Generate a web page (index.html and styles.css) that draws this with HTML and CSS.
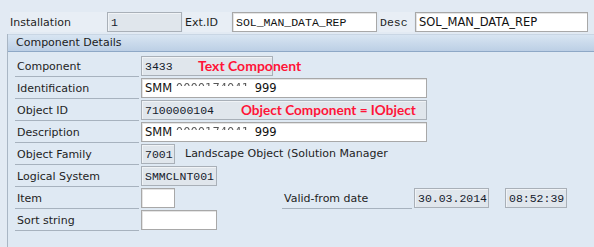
FILE: index.html
```html
<!DOCTYPE html>
<html lang="en">
<head>
    <meta charset="UTF-8">
    <title>Component Details</title>
    <link rel="stylesheet" href="styles.css">
</head>
<body>
    <div class="top-row">
        <span class="lbl lbl-inst">Installation</span>
        <span class="box ro mono w-inst">1</span>
        <span class="lbl lbl-ext">Ext.ID</span>
        <span class="box mono w-ext">SOL_MAN_DATA_REP</span>
        <span class="lbl lbl-desc mono">Desc</span>
        <span class="box w-desc">SOL_MAN_DATA_REP</span>
    </div>

    <div class="group">
        <div class="group-head">Component Details</div>
        <div class="group-body">
            <div class="row">
                <span class="field-lbl">Component</span>
                <span class="box ro mono w-comp">3433</span>
                <span class="note note-text">Text Component</span>
            </div>
            <div class="row">
                <span class="field-lbl">Identification</span>
                <span class="box w-long">SMM <span class="hidden-part">0000174041</span> 999</span>
            </div>
            <div class="row">
                <span class="field-lbl">Object ID</span>
                <span class="box ro mono w-long">7100000104</span>
                <span class="note note-obj">Object Component = IObject</span>
            </div>
            <div class="row">
                <span class="field-lbl">Description</span>
                <span class="box w-long">SMM <span class="hidden-part">0000174041</span> 999</span>
            </div>
            <div class="row">
                <span class="field-lbl">Object Family</span>
                <span class="box ro mono w-short">7001</span>
                <span class="plain">Landscape Object (Solution Manager</span>
            </div>
            <div class="row">
                <span class="field-lbl">Logical System</span>
                <span class="box ro mono w-mid">SMMCLNT001</span>
            </div>
            <div class="row">
                <span class="field-lbl">Item</span>
                <span class="box w-short"></span>
                <span class="field-lbl lbl-valid">Valid-from date</span>
                <span class="box ro mono w-date">30.03.2014</span>
                <span class="box ro mono w-time">08:52:39</span>
            </div>
            <div class="row">
                <span class="field-lbl">Sort string</span>
                <span class="box w-mid"></span>
            </div>
        </div>
    </div>
</body>
</html>
```

FILE: styles.css
```css
body {
    margin: 0;
    background-color: #e2eaf3;
    font-family: 'DejaVu Sans', 'Liberation Sans', sans-serif;
    font-size: 11px;
    color: #1e1e1e;
    height: 247px;
    overflow: hidden;
}

.mono {
    font-family: 'Liberation Mono', 'DejaVu Sans Mono', monospace;
    font-size: 11.5px;
}

/* top line */
.top-row {
    display: flex;
    align-items: center;
    padding: 12px 0 0 10px;
    height: 20px;
}

.lbl {
    display: flex;
    align-items: center;
    height: 20px;
    background-color: #e8eef5;
}

.lbl-inst { width: 97px; }
.lbl-ext { width: 48px; margin-left: 1px; padding-left: 2px; box-sizing: border-box; }
.lbl-desc { width: 35px; margin-left: 2px; padding-left: 1px; box-sizing: border-box; }

.box {
    display: flex;
    align-items: center;
    box-sizing: border-box;
    height: 20px;
    padding-left: 3px;
    background-color: #fff;
    border: 1px solid #a8a8a8;
    box-shadow: inset 1px 1px 0 #e4e4e4;
    white-space: pre;
    overflow: hidden;
    color: #111;
}

.box.ro {
    background-color: #e0e6ec;
    border-color: #a9b0b8;
    box-shadow: inset 1px 1px 0 #f0f3f6;
    color: #15202c;
}

.w-inst { width: 75px; }
.w-ext { width: 145px; margin-left: 1px; }
.w-desc { width: 173px; margin-left: 1px; font-size: 11.5px; }

/* group box */
.group {
    margin: 2px 0 0 7px;
    border-left: 1px solid #a9b6c4;
    height: 220px;
}

.group-head {
    height: 16px;
    line-height: 16px;
    padding-left: 8px;
    background: linear-gradient(#d8e5f2, #bccfe5);
    border-top: 1px solid #c9d6e4;
    border-bottom: 1px solid #8ea8c6;
    color: #1b1b1b;
}

.group-body {
    padding: 4px 0 0 7px;
    background-color: #dfe9f3;
    height: 200px;
}

.row {
    position: relative;
    display: flex;
    align-items: flex-start;
    height: 22px;
}

.field-lbl {
    display: flex;
    align-items: center;
    box-sizing: border-box;
    width: 124px;
    height: 21px;
    padding-left: 2px;
    margin-right: 2px;
    border-bottom: 1px solid #a7b2be;
}

.w-comp { width: 132px; }
.w-long { width: 286px; font-family: 'DejaVu Sans', sans-serif; font-size: 11.5px; }
.w-long.mono { font-family: 'Liberation Mono', monospace; }
.w-short { width: 34px; }
.w-mid { width: 76px; }
.w-date { width: 75px; }
.w-time { width: 62px; margin-left: 16px; }

.lbl-valid {
    width: 130px;
    margin-left: 107px;
}

.plain {
    margin-left: 10px;
    line-height: 20px;
}

/* digits blanked out in the screenshot: only their tops remain */
.hidden-part {
    color: transparent;
    background: linear-gradient(to bottom, #555 38%, #fff 38%);
    -webkit-background-clip: text;
    background-clip: text;
    margin-right: 2px;
}

/* red annotations on top of the form */
.note {
    position: absolute;
    font-family: 'Lato', 'Liberation Sans', sans-serif;
    font-weight: bold;
    font-size: 14px;
    color: #ff1438;
    line-height: 20px;
}

.note-text { left: 183px; top: 0; }
.note-obj { left: 226px; top: 0; font-size: 13.6px; }
```
